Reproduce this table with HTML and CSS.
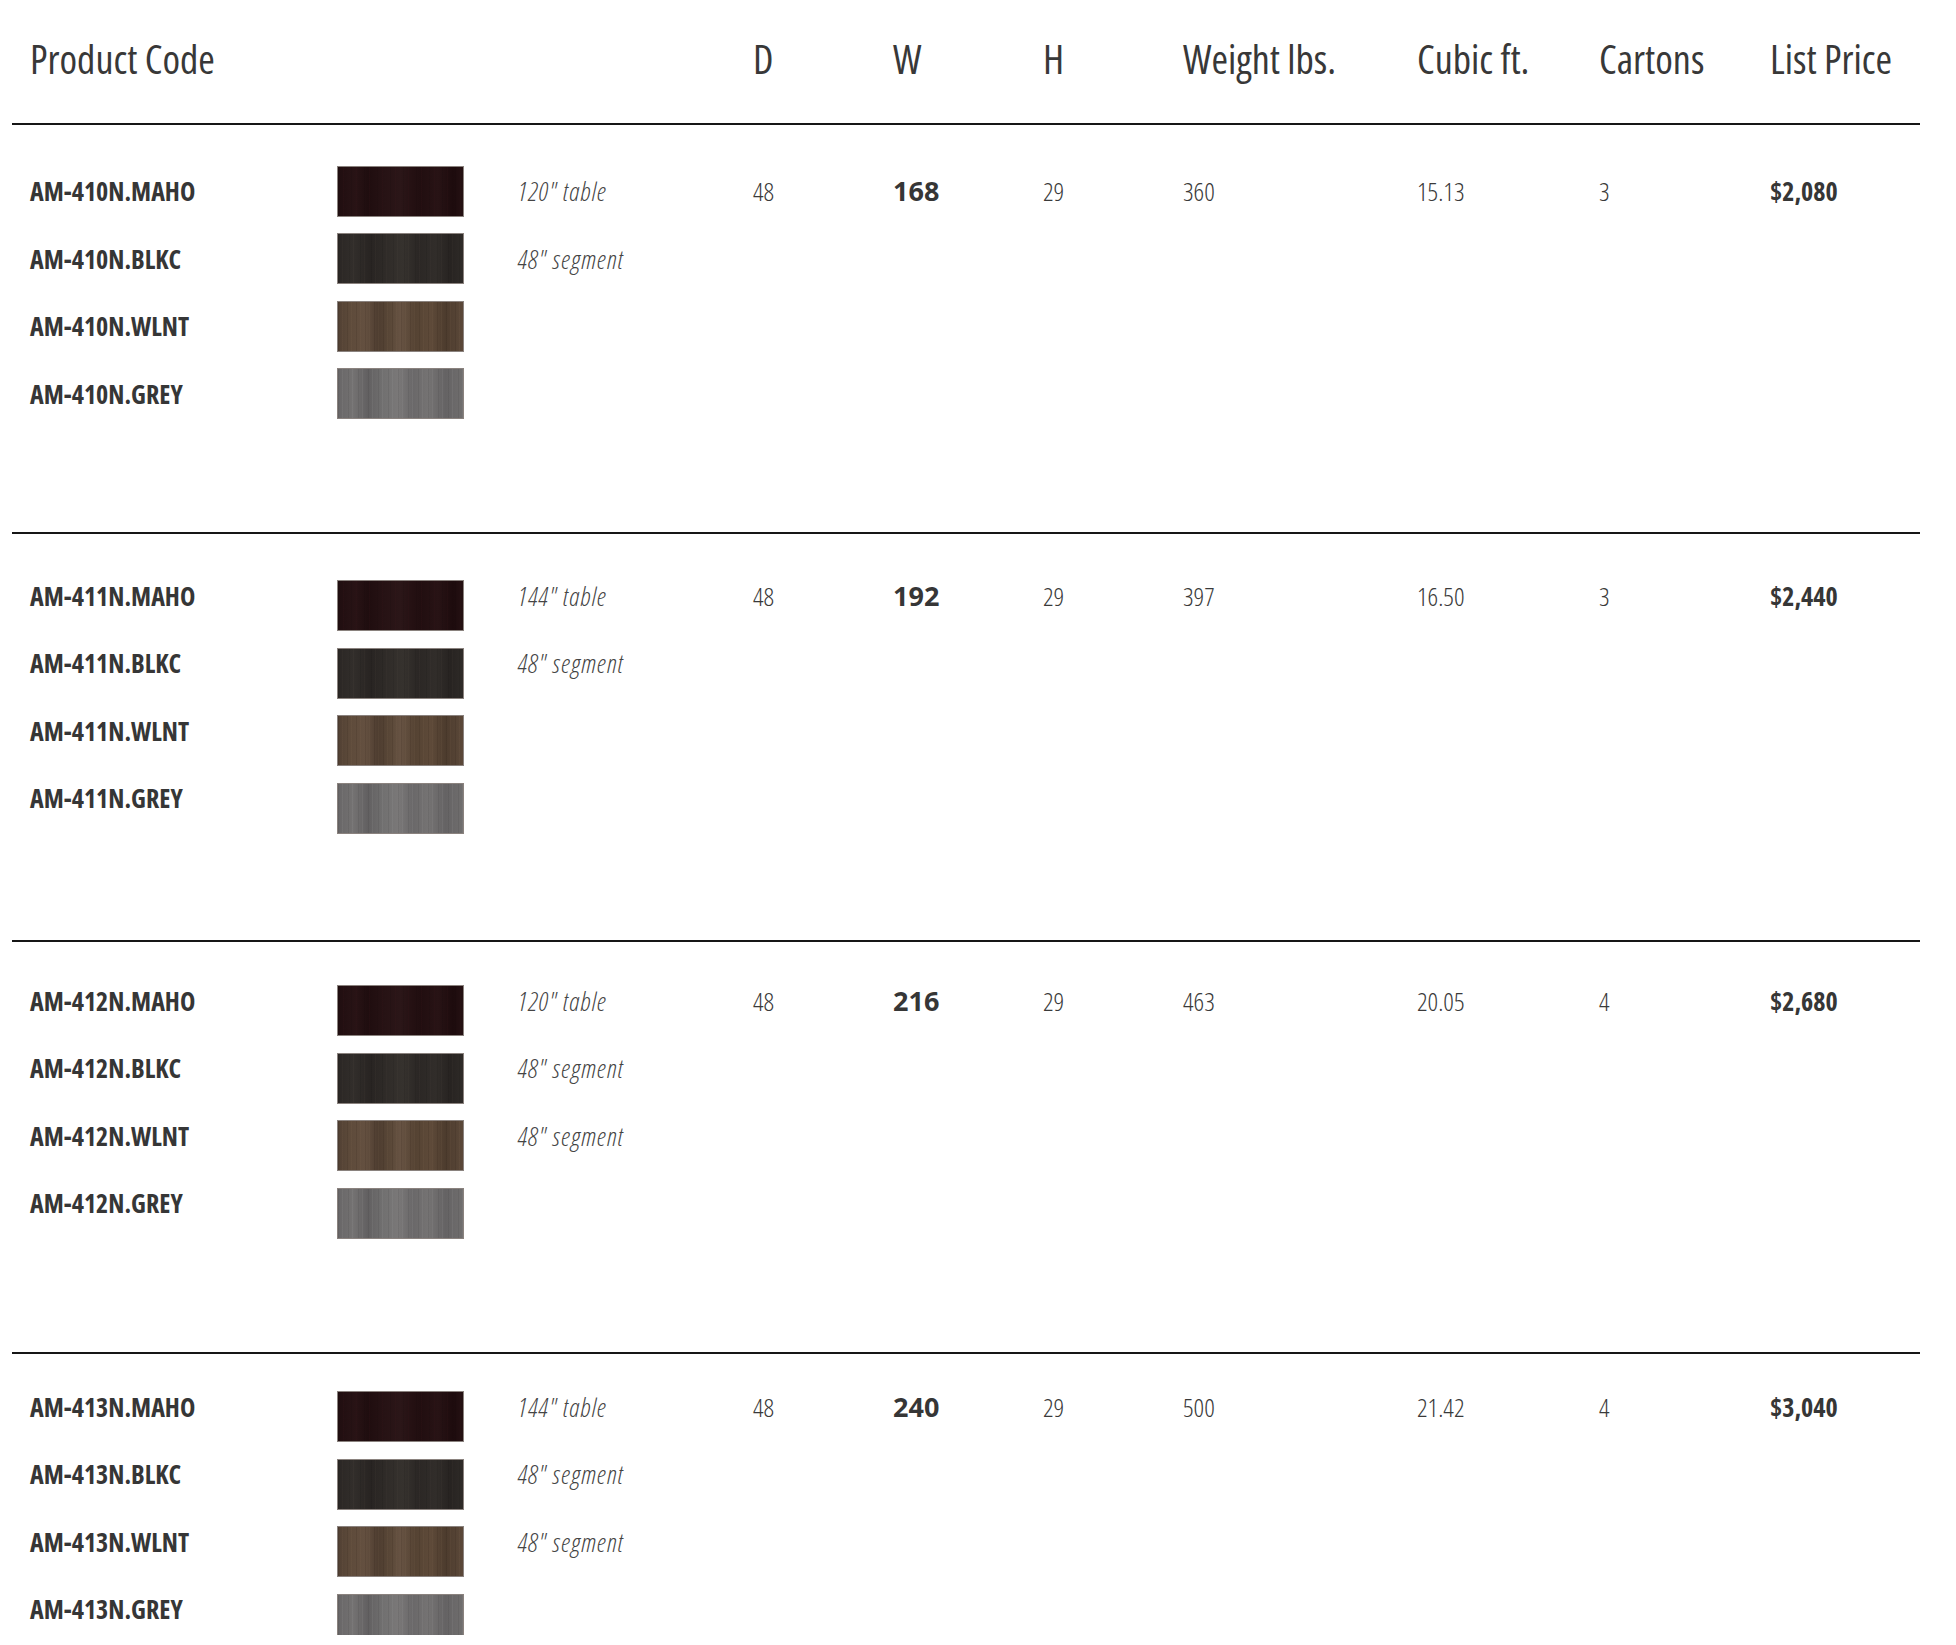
FILE: index.html
```html
<!DOCTYPE html>
<html lang="en">
<head>
<meta charset="utf-8">
<title>Product Table</title>
<link rel="stylesheet" href="styles.css">
</head>
<body>
<div class="sheet">
  <div class="header">
    <span class="h-code">Product Code</span>
    <span class="h-d">D</span>
    <span>W</span>
    <span>H</span>
    <span>Weight lbs.</span>
    <span>Cubic ft.</span>
    <span>Cartons</span>
    <span>List Price</span>
  </div>

  <section class="group g1">
    <span class="code">AM-410N.MAHO</span><span class="swatch maho"></span><span class="desc">120" table</span>
    <span class="val">48</span><span class="val bold-w">168</span><span class="val">29</span><span class="val">360</span><span class="val">15.13</span><span class="val">3</span><span class="val price">$2,080</span>
    <span class="code">AM-410N.BLKC</span><span class="swatch blkc"></span><span class="desc">48" segment</span>
    <span class="code">AM-410N.WLNT</span><span class="swatch wlnt"></span>
    <span class="code">AM-410N.GREY</span><span class="swatch grey"></span>
  </section>

  <section class="group g2 offset">
    <span class="code">AM-411N.MAHO</span><span class="swatch maho"></span><span class="desc">144" table</span>
    <span class="val">48</span><span class="val bold-w">192</span><span class="val">29</span><span class="val">397</span><span class="val">16.50</span><span class="val">3</span><span class="val price">$2,440</span>
    <span class="code">AM-411N.BLKC</span><span class="swatch blkc"></span><span class="desc">48" segment</span>
    <span class="code">AM-411N.WLNT</span><span class="swatch wlnt"></span>
    <span class="code">AM-411N.GREY</span><span class="swatch grey"></span>
  </section>

  <section class="group g3 offset">
    <span class="code">AM-412N.MAHO</span><span class="swatch maho"></span><span class="desc">120" table</span>
    <span class="val">48</span><span class="val bold-w">216</span><span class="val">29</span><span class="val">463</span><span class="val">20.05</span><span class="val">4</span><span class="val price">$2,680</span>
    <span class="code">AM-412N.BLKC</span><span class="swatch blkc"></span><span class="desc">48" segment</span>
    <span class="code">AM-412N.WLNT</span><span class="swatch wlnt"></span><span class="desc">48" segment</span>
    <span class="code">AM-412N.GREY</span><span class="swatch grey"></span>
  </section>

  <section class="group g4 offset">
    <span class="code">AM-413N.MAHO</span><span class="swatch maho"></span><span class="desc">144" table</span>
    <span class="val">48</span><span class="val bold-w">240</span><span class="val">29</span><span class="val">500</span><span class="val">21.42</span><span class="val">4</span><span class="val price">$3,040</span>
    <span class="code">AM-413N.BLKC</span><span class="swatch blkc"></span><span class="desc">48" segment</span>
    <span class="code">AM-413N.WLNT</span><span class="swatch wlnt"></span><span class="desc">48" segment</span>
    <span class="code">AM-413N.GREY</span><span class="swatch grey"></span>
  </section>
</div>
</body>
</html>
```

FILE: styles.css
```css
html, body {
  margin: 0;
  padding: 0;
  background: #ffffff;
  overflow: hidden;
}

body {
  font-family: "Open Sans", "DejaVu Sans Condensed", sans-serif;
  font-stretch: 75%;
  color: #333333;
}

.sheet {
  width: 1908px;
  margin-left: 12px;
}

.header,
.group {
  display: grid;
  grid-template-columns: 307px 181px 235px 140px 150px 140px 234px 182px 171px 1fr;
  padding-left: 18px;
}

.header {
  padding-top: 38.5px;
  padding-bottom: 44.5px;
  border-bottom: 2px solid #161616;
  font-size: 40px;
  line-height: 40px;
  font-weight: 400;
  color: #383838;
  white-space: nowrap;
}

.h-code {
  grid-column: 1 / span 3;
}

.h-d {
  grid-column: 4;
}

.group {
  grid-template-rows: repeat(4, 51px);
  row-gap: 16.5px;
  align-items: center;
  border-top: 2px solid #161616;
  font-size: 26px;
  line-height: 26px;
  white-space: nowrap;
}

.g1 {
  border-top: none;
  padding-top: 40.5px;
  padding-bottom: 113px;
}

.g2 {
  padding-top: 36px;
  padding-bottom: 116.5px;
}

.g3 {
  padding-top: 33px;
  padding-bottom: 123.5px;
}

.g4 {
  padding-top: 27px;
}

.code {
  grid-column: 1;
  font-weight: 700;
  color: #363636;
}

.swatch {
  display: block;
  width: 127px;
  height: 51px;
  box-sizing: border-box;
  border: 1px solid #8a827e;
}

.offset .swatch {
  margin-top: 10px;
  margin-bottom: -10px;
}

.desc {
  font-style: italic;
  font-weight: 300;
  font-stretch: 85%;
  font-size: 26px;
  letter-spacing: 1px;
  color: #444444;
}

.val {
  font-weight: 300;
  font-stretch: 80%;
  color: #3a3a3a;
}

.bold-w {
  font-stretch: 100%;
  font-size: 27px;
  font-weight: 700;
  color: #363636;
}

.price {
  font-weight: 700;
  color: #363636;
}

.maho {
  background-color: #261214;
  background-image:
    repeating-linear-gradient(90deg, rgba(0,0,0,0.07) 0 1px, rgba(0,0,0,0) 1px 5px, rgba(70,25,30,0.1) 5px 6px, rgba(0,0,0,0) 6px 13px),
    linear-gradient(90deg, #200e10 0%, #281315 14%, #1f0d0f 24%, #261214 36%, #2b1618 50%, #241012 60%, #210e10 66%, #281315 80%, #1d0b0d 92%, #251113 100%);
}

.blkc {
  background-color: #2f2b28;
  background-image:
    repeating-linear-gradient(90deg, rgba(0,0,0,0.08) 0 1px, rgba(0,0,0,0) 1px 4px, rgba(90,80,70,0.1) 4px 5px, rgba(0,0,0,0) 5px 11px),
    linear-gradient(90deg, #2a2624 0%, #322e2b 12%, #282422 26%, #302c29 40%, #36322e 52%, #2b2725 64%, #312d2a 78%, #272321 90%, #2f2b28 100%);
}

.wlnt {
  background-color: #5a4839;
  background-image:
    repeating-linear-gradient(90deg, rgba(30,18,10,0.12) 0 1px, rgba(0,0,0,0) 1px 4px, rgba(140,115,90,0.1) 4px 5px, rgba(0,0,0,0) 5px 9px),
    linear-gradient(90deg, #514033 0%, #5e4b3b 10%, #645040 22%, #4e3d30 32%, #5a4838 42%, #675343 50%, #554333 62%, #5e4a39 74%, #4d3c2e 86%, #5b4839 100%);
}

.grey {
  background-color: #6f6d6d;
  background-image:
    repeating-linear-gradient(90deg, rgba(40,40,40,0.1) 0 1px, rgba(0,0,0,0) 1px 4px, rgba(170,170,170,0.12) 4px 5px, rgba(0,0,0,0) 5px 10px),
    linear-gradient(90deg, #686667 0%, #747272 12%, #626061 24%, #717070 36%, #7a7878 48%, #6a6869 60%, #757373 72%, #656364 86%, #706e6e 100%);
}
```
